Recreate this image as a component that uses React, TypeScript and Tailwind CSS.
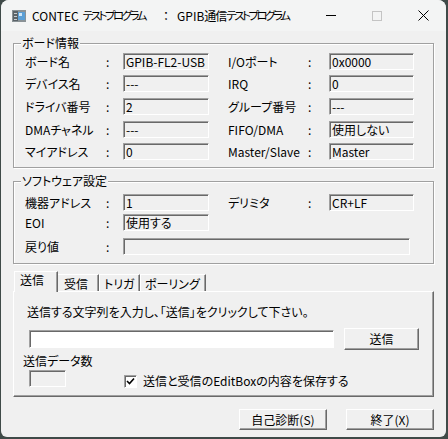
const edge =
  'border border-t-[#a0a0a0] border-l-[#a0a0a0] border-r-white border-b-white shadow-[inset_1px_1px_0_#696969]';

const raised =
  'border border-t-white border-l-white border-r-[#696969] border-b-[#696969] shadow-[inset_-1px_-1px_0_#a0a0a0]';

const boardRows = [
  { l: 'ボード名', v: 'GPIB-FL2-USB', l2: 'I/Oポート', v2: '0x0000', mt: 'mt-0' },
  { l: 'デバイス名', v: '---', l2: 'IRQ', v2: '0', mt: 'mt-[5px]' },
  { l: 'ドライバ番号', v: '2', l2: 'グループ番号', v2: '---', mt: 'mt-[6px]' },
  { l: 'DMAチャネル', v: '---', l2: 'FIFO/DMA', v2: '使用しない', mt: 'mt-[6px]' },
  { l: 'マイアドレス', v: '0', l2: 'Master/Slave', v2: 'Master', mt: 'mt-[5px]' },
];

function Field({ label, value, right }: { label: string; value: string; right?: boolean }) {
  return (
    <div className="flex items-center">
      <div className={`${right ? 'w-[80px]' : 'w-[81px]'} leading-[17px] whitespace-nowrap`}>{label}</div>
      <div className={`${right ? 'w-[21px]' : 'w-[17px]'} leading-[17px]`}>:</div>
      <div className={`${right ? 'w-[85px]' : 'w-[86px]'} h-[17px] ${edge} pl-[2px] leading-[15px] whitespace-nowrap`}>
        {value}
      </div>
    </div>
  );
}

function GroupBox({ title, className, children }: { title: string; className?: string; children: React.ReactNode }) {
  return (
    <fieldset
      className={`border border-[#a0a0a0] shadow-[inset_1px_1px_0_#fff,1px_1px_0_#fff] pl-[7px] pr-[4px] ${className ?? ''}`}
    >
      <legend className="px-px leading-[14px] bg-[#f0f0f0]">{title}</legend>
      {children}
    </fieldset>
  );
}

function AppIcon() {
  return (
    <svg width="16" height="16" viewBox="0 0 16 16">
      <rect x="1" y="2" width="14" height="12" fill="#8a9296" />
      <rect x="2" y="3" width="5" height="10" fill="#5b6368" />
      <rect x="7" y="4" width="7" height="8" fill="#5a9fd6" />
      <rect x="8" y="5" width="3" height="3" fill="#cfe6f7" />
      <rect x="3" y="5" width="3" height="1" fill="#c8cdd0" />
      <rect x="3" y="8" width="3" height="1" fill="#c8cdd0" />
      <rect x="3" y="11" width="3" height="1" fill="#c8cdd0" />
    </svg>
  );
}

export default function App() {
  return (
    <div className="w-[448px] h-[439px] bg-[#3f4a48] pl-px pr-[2px] pb-[2px] text-[12px] text-black font-['Noto_Sans_CJK_JP','Noto_Sans',sans-serif] [font-feature-settings:'palt']">
      <div className="h-full flex flex-col rounded-t-[8px] rounded-b-[6px] bg-[#f0f0f0] overflow-hidden">
        {/* Title bar */}
        <div className="h-[31px] flex items-center bg-[#f3f4f4] shrink-0">
          <div className="ml-[10px] mt-px">
            <AppIcon />
          </div>
          <div className="ml-[5px] whitespace-nowrap flex items-center">
            <span>CONTEC</span>
            <span className="ml-[4px] text-[11.5px] tracking-[-2.5px]">テストプログラム</span>
            <span className="ml-[18px] mr-[8px]">：</span>
            <span>GPIB</span>
            <span className="tracking-[-1px]">通信</span>
            <span className="text-[11.5px] tracking-[-2.5px]">テストプログラム</span>
          </div>
          <div className="ml-auto flex h-full">
            <div className="w-[46px] flex items-center justify-center">
              <div className="w-[10px] h-px bg-black" />
            </div>
            <div className="w-[46px] flex items-center justify-center">
              <div className="w-[10px] h-[10px] border border-[#c4c4c4]" />
            </div>
            <div className="w-[46px] flex items-center justify-center">
              <svg width="11" height="11" viewBox="0 0 11 11">
                <path d="M0.5 0.5 L10.5 10.5 M10.5 0.5 L0.5 10.5" stroke="#000" strokeWidth="1" />
              </svg>
            </div>
          </div>
        </div>

        {/* Body */}
        <div className="flex flex-col px-[12px] pt-[5px]">
          <GroupBox title="ボード情報" className="pt-[3px] pb-[7px]">
            {boardRows.map((r) => (
              <div key={r.l} className={`flex ml-[4px] ${r.mt}`}>
                <Field label={r.l} value={r.v} />
                <div className="w-[19px]" />
                <Field label={r.l2} value={r.v2} right />
              </div>
            ))}
          </GroupBox>

          <GroupBox title="ソフトウェア設定" className="mt-[6px] pt-[6px] pb-[8px]">
            <div className="flex ml-[4px]">
              <Field label="機器アドレス" value="1" />
              <div className="w-[19px]" />
              <Field label="デリミタ" value="CR+LF" right />
            </div>
            <div className="flex ml-[4px] mt-[3px]">
              <Field label="EOI" value="使用する" />
            </div>
            <div className="flex items-center ml-[4px] mt-[7px]">
              <div className="w-[81px] leading-[17px]">戻り値</div>
              <div className="w-[17px] leading-[17px]">:</div>
              <div className={`w-[287px] h-[17px] ${edge}`} />
            </div>
          </GroupBox>

          {/* Tabs */}
          <div className="mt-[7px] flex items-end ml-px h-[20px] relative z-10 whitespace-nowrap">
            <div className="w-[44px] h-[21px] mb-[-1px] border-l border-t border-r border-l-white border-t-white border-r-[#696969] bg-[#f0f0f0] shadow-[inset_-1px_0_0_#a0a0a0] pl-[5px] leading-[16px]">
              送信
            </div>
            <div className="w-[41px] h-[17px] border-t border-r border-t-white border-r-[#696969] shadow-[inset_-1px_0_0_#a0a0a0] pl-[6px] leading-[17px]">
              受信
            </div>
            <div className="w-[41px] h-[17px] border-l border-t border-r border-l-white border-t-white border-r-[#696969] shadow-[inset_-1px_0_0_#a0a0a0] pl-[4px] leading-[17px]">
              トリガ
            </div>
            <div className="w-[66px] h-[17px] border-l border-t border-r border-l-white border-t-white border-r-[#696969] shadow-[inset_-1px_0_0_#a0a0a0] pl-[4px] leading-[17px]">
              ポーリング
            </div>
          </div>
          <div className={`h-[106px] ${raised} pl-[13px] pt-[13px]`}>
            <div className="leading-[14px] whitespace-nowrap">
              送信する文字列を入力し、「送信」をクリックして下さい。
            </div>
            <div className="flex items-center mt-[9px]">
              <div className={`ml-[2px] w-[305px] h-[18px] bg-white ${edge}`} />
              <button className={`ml-[10px] w-[75px] h-[22px] ${raised} bg-[#f0f0f0] leading-[18px]`}>送信</button>
            </div>
            <div className="mt-[4px] ml-[-4px] leading-[14px]">送信データ数</div>
            <div className="flex items-start mt-[2px]">
              <div className={`ml-[2px] w-[37px] h-[17px] ${edge}`} />
              <div className="ml-[58px] mt-[4px] flex items-center">
                <div className={`w-[13px] h-[13px] bg-white ${edge} flex items-center justify-center`}>
                  <svg width="9" height="9" viewBox="0 0 9 9">
                    <path d="M1 4 L3.5 6.5 L8 1.5" stroke="#000" strokeWidth="1.6" fill="none" />
                  </svg>
                </div>
                <div className="ml-[6px] leading-[14px] whitespace-nowrap">送信と受信のEditBoxの内容を保存する</div>
              </div>
            </div>
          </div>

          {/* Buttons */}
          <div className="flex justify-end mt-[12px] gap-[19px]">
            <button className={`w-[88px] h-[21px] ${raised} bg-[#f0f0f0] leading-[17px]`}>自己診断(S)</button>
            <button className={`w-[88px] h-[21px] ${raised} bg-[#f0f0f0] leading-[17px]`}>終了(X)</button>
          </div>
        </div>
      </div>
    </div>
  );
}
